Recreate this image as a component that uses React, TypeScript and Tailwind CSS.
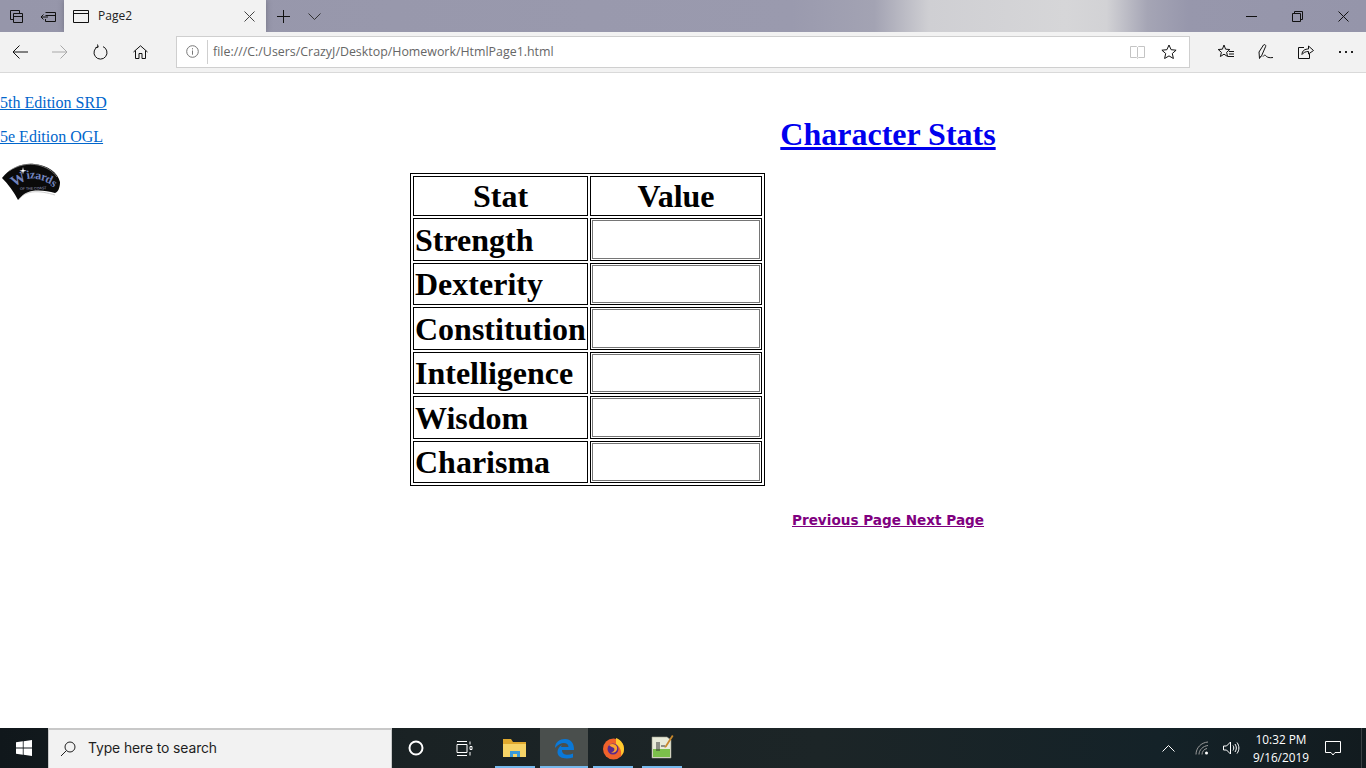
import React from "react";

const Ico = ({ w = 16, h = 16, children, className = "" }: { w?: number; h?: number; children: React.ReactNode; className?: string }) => (
  <svg width={w} height={h} viewBox={`0 0 ${w} ${h}`} fill="none" stroke="currentColor" strokeWidth="1" className={className}>
    {children}
  </svg>
);

const rows = ["Strength", "Dexterity", "Constitution", "Intelligence", "Wisdom", "Charisma"];

function TabBar() {
  return (
    <div className="h-8 flex items-stretch text-[#111] bg-[linear-gradient(90deg,#9696aa_0%,#9a9aae_58%,#a3a3b3_64%,#cfcfd3_68%,#d6d6d8_78%,#d2d2d5_81%,#a5a5b5_84%,#9797ac_87%,#9595aa_100%)]">
      <div className="w-[32px] flex items-center justify-center">
        <Ico w={15} h={15}>
          <path d="M1.5 1.5h9v3M1.5 1.5v9h3M4.5 4.5h9v9h-9zM4.5 7.5h9" />
        </Ico>
      </div>
      <div className="w-[32px] flex items-center justify-center">
        <Ico w={17} h={13}>
          <path d="M5.5 2.5h10v9h-10v-2.5M5.5 5.5h10M1 7h7M3.5 4.5L1 7l2.5 2.5" />
        </Ico>
      </div>
      <div className="w-[202px] bg-[#f2f2f2] flex items-center pl-[9px] shadow-[0_0_6px_rgba(0,0,0,0.25)]">
        <Ico w={16} h={13}>
          <path d="M0.5 0.5h15v12h-15zM0.5 3.5h15" />
        </Ico>
        <span className="ml-[9px] text-[12px] text-[#222] font-['Open_Sans',sans-serif] flex-1">Page2</span>
        <Ico w={11} h={11} className="mr-[11px] text-[#444]">
          <path d="M0.5 0.5l10 10M10.5 0.5l-10 10" />
        </Ico>
      </div>
      <div className="w-[34px] flex items-center justify-center">
        <Ico w={13} h={13} className="text-[#111]">
          <path d="M6.5 0v13M0 6.5h13" />
        </Ico>
      </div>
      <div className="w-[28px] flex items-center justify-center">
        <Ico w={13} h={7} className="text-[#333]">
          <path d="M0.5 0.5l6 6 6-6" />
        </Ico>
      </div>
      <div className="flex-1" />
      <div className="w-[46px] flex items-center justify-center">
        <Ico w={11} h={3}>
          <path d="M0 1.5h11" />
        </Ico>
      </div>
      <div className="w-[46px] flex items-center justify-center">
        <Ico w={11} h={11}>
          <path d="M0.5 2.5h8v8h-8zM2.5 2.5v-2h8v8h-2" />
        </Ico>
      </div>
      <div className="w-[46px] flex items-center justify-center">
        <Ico w={11} h={11}>
          <path d="M0.5 0.5l10 10M10.5 0.5l-10 10" />
        </Ico>
      </div>
    </div>
  );
}

function ToolBar() {
  return (
    <div className="h-[41px] bg-[#f2f2f2] border-b border-[#d9d9d9] flex items-center text-[#111] pb-[1px]">
      <div className="w-[176px] flex items-center shrink-0">
        <div className="w-[40px] flex justify-center">
          <Ico w={16} h={14}>
            <path d="M16 7H1M7.5 0.5L1 7l6.5 6.5" />
          </Ico>
        </div>
        <div className="w-[40px] flex justify-center">
          <Ico w={16} h={14} className="text-[#a8a8a8]">
            <path d="M0 7h15M8.5 0.5L15 7l-6.5 6.5" />
          </Ico>
        </div>
        <div className="w-[40px] flex justify-center">
          <Ico w={15} h={16}>
            <path d="M5 2.6a6.5 6.5 0 1 0 5 0M4.5 0.5l0.7 2.6-2.7 0.5" />
          </Ico>
        </div>
        <div className="w-[40px] flex justify-center">
          <Ico w={15} h={14}>
            <path d="M0.5 7L7.5 0.8 14.5 7M2.5 5.5v8h3.5v-5h3v5h3.5v-8" />
          </Ico>
        </div>
      </div>
      <div className="w-[1014px] h-[32px] bg-white border border-[#cfcfcf] flex items-center shrink-0">
        <div className="w-[30px] flex justify-center text-[#777]">
          <Ico w={13} h={13}>
            <circle cx="6.5" cy="6.5" r="5.8" />
            <path d="M6.5 5.5v4.2M6.5 3.2v1.2" />
          </Ico>
        </div>
        <div className="w-px h-[24px] bg-[#cfcfcf]" />
        <span className="ml-[5px] pt-[2px] flex-1 text-[12.4px] text-[#666] font-['Open_Sans',sans-serif]">file:///C:/Users/CrazyJ/Desktop/Homework/HtmlPage1.html</span>
        <div className="w-[16px] mr-[16px] text-[#c4c4c4] flex justify-center">
          <Ico w={15} h={14}>
            <path d="M0.5 1.5h6l1 1 1-1h6v11h-6l-1 1-1-1h-6zM7.5 2.5v10" />
          </Ico>
        </div>
        <div className="w-[16px] mr-[12px] flex justify-center">
          <Ico w={16} h={15}>
            <path d="M8 1l2.1 4.7 5 .5-3.8 3.3 1.1 5L8 11.9l-4.4 2.6 1.1-5L.9 6.2l5-.5z" />
          </Ico>
        </div>
      </div>
      <div className="flex-1 flex items-center">
        <div className="w-[40px] ml-[16px] flex justify-center">
          <Ico w={16} h={15}>
            <path d="M6 1l1.6 4.2 4.2.3-3.2 2.8 1 4.2L6 10.2 2.4 12.5l1-4.2L.2 5.5l4.2-.3zM11 7.5h5M11 10h5M10 12.5h6" />
          </Ico>
        </div>
        <div className="w-[40px] flex justify-center">
          <Ico w={16} h={16}>
            <path d="M3 12L1.5 14.5 1 8 5.5 1c1-1 2.6 0 2.2 1.3L3.5 12c-.2.5-.4.3-.5 0zM5 12.5c1.500-2 2.500-1.500 3.500 0 1.500 1 3 1.500 6.500 1" />
          </Ico>
        </div>
        <div className="w-[40px] flex justify-center">
          <Ico w={16} h={14}>
            <path d="M6 2.500H0.500v11h11V9M4 9.500c0-4 3-5.500 6.500-5.500V1L15.500 5.500 10.500 9V6.500c-3 0-5 1-6.500 3z" />
          </Ico>
        </div>
        <div className="w-[40px] flex justify-center gap-[4px]">
          <span className="w-[2px] h-[2px] bg-[#222]" />
          <span className="w-[2px] h-[2px] bg-[#222]" />
          <span className="w-[2px] h-[2px] bg-[#222]" />
        </div>
      </div>
    </div>
  );
}

const logoLetters: [string, number, number, number, number][] = [
  ["W", 14, 25, -30, 15],
  ["i", 27, 17, -8, 12],
  ["z", 30, 16.5, -2, 12],
  ["a", 35, 17, 5, 12],
  ["r", 40.5, 18, 15, 12],
  ["d", 44.5, 19.5, 25, 12],
  ["s", 50, 23, 35, 12],
];

function WizardsLogo() {
  return (
    <svg width="61" height="38" viewBox="0 0 61 38" className="block">
      <path d="M18.500 38C22 33 26 31 32 30c8-1 16 1 23 3" fill="none" stroke="#cfcfcf" strokeWidth="1" />
      <path d="M2 16C10 6 22 1 34 2c14 1 24 9 26 18 0 6-2 10-5 11-7-2-15-3-23-2-6 1-10 4-14 9C14 30 8 22 2 16z" fill="#0a0a0a" />
      <path d="M9 9C18 3 28 1 38 3c8 2 15 6 19 12" fill="none" stroke="#8a8a8a" strokeWidth="0.8" />
      {logoLetters.map(([c, x, y, r, s]) => (
        <text key={c} x={x} y={y} fontSize={s} fontFamily="'Liberation Serif',serif" fontWeight="700" fill="#7183bd" transform={`rotate(${r} ${x} ${y})`}>
          {c}
        </text>
      ))}
      <path d="M23 5l.7 3 3 .7-3 .7-.7 3-.7-3-3-.7 3-.7z" fill="#fff" />
      <text x="20" y="28" fontSize="3.6" fontFamily="'Liberation Sans',sans-serif" fill="#a3aed2" transform="rotate(-2 20 28)">OF THE COAST</text>
    </svg>
  );
}

function Page() {
  return (
    <div className="flex-1 bg-white flex font-['Liberation_Serif',serif] text-black overflow-hidden">
      <div className="w-[410px] shrink-0 pt-[21px] text-[16px] leading-[18px]">
        <p className="mb-4"><a className="text-[#0066cc] underline" href="#">5th Edition SRD</a></p>
        <p className="mb-4"><a className="text-[#0066cc] underline" href="#">5e Edition OGL</a></p>
        <WizardsLogo />
      </div>
      <div className="flex-1">
        <h1 className="mt-[43px] mb-[21px] text-[32px] leading-[36px] font-bold text-center">
          <a className="text-[#0000ee] underline" href="#">Character Stats</a>
        </h1>
        <table className="border border-black border-separate border-spacing-[2px] text-[32px] leading-[37px] font-bold w-[355px] table-fixed">
          <thead>
            <tr>
              <th className="border border-black h-[40px] p-0 w-[175px] text-center">Stat</th>
              <th className="border border-black h-[40px] p-0 text-center">Value</th>
            </tr>
          </thead>
          <tbody>
            {rows.map((r) => (
              <tr key={r}>
                <td className="border border-black h-[42.5px] p-0 pl-[1px] pt-[2px] whitespace-nowrap">{r}</td>
                <td className="border border-black h-[42.5px] p-[1px] align-middle">
                  <input className="block w-full h-[38.5px] border border-[#767676] bg-white outline-none" aria-label={r} />
                </td>
              </tr>
            ))}
          </tbody>
        </table>
        <div className="mt-[24px] text-center text-[13.6px] leading-[20px] font-bold font-['DejaVu_Sans',sans-serif]">
          <a className="text-[#800080] underline" href="#">Previous Page</a>
          <a className="text-[#800080] underline" href="#"> Next Page</a>
        </div>
      </div>
    </div>
  );
}

function TaskBar() {
  const run = "absolute left-0 right-0 bottom-0 h-[2px] bg-[#76b9ed]";
  return (
    <div className="h-10 flex items-stretch text-white bg-[linear-gradient(90deg,#10171b_0%,#1a2224_30%,#1c2527_60%,#142228_85%,#121b1f_100%)] font-['Open_Sans',sans-serif]">
      <div className="w-[48px] flex items-center justify-center">
        <svg width="16" height="16" viewBox="0 0 16 16" fill="#fff">
          <path d="M0 2.300l6.800-1v6.200H0zM7.600 1.200L16 0v7.500H7.600zM0 8.400h6.800v6.300L0 13.700zM7.600 8.400H16V16l-8.400-1.200z" />
        </svg>
      </div>
      <div className="w-[344px] bg-[#f2f2f2] border-t-2 border-x border-[#c8c8c8] flex items-center pl-[11px] text-[#1f1f1f]">
        <Ico w={16} h={16}>
          <circle cx="10" cy="6" r="5" />
          <path d="M6.400 9.600L1 15" />
        </Ico>
        <span className="ml-[12px] pb-[2px] text-[13.9px] font-['Inter',sans-serif] tracking-[-0.1px]">Type here to search</span>
      </div>
      <div className="w-[48px] flex items-center justify-center">
        <svg width="16" height="16" viewBox="0 0 16 16" fill="none" stroke="#fff" strokeWidth="2">
          <circle cx="8" cy="8" r="6.500" />
        </svg>
      </div>
      <div className="w-[48px] flex items-center justify-center">
        <Ico w={17} h={15}>
          <path d="M1 .5h10M1 14.500h10M1 3.500h10v8H1zM14 .5v3M14 5.500v3h2M14 5.500h2v3M14 11v3.500" />
        </Ico>
      </div>
      <div className="w-[7px]" />
      <div className="w-[40px] relative flex items-center justify-center">
        <svg width="24" height="20" viewBox="0 0 24 20">
          <path d="M0 1h8l2 3h13v3H0z" fill="#e0a92e" />
          <path d="M0 6h23v13H0z" fill="#f6d366" />
          <path d="M7 13h10v6h-3v-3h-4v3H7z" fill="#3b9ad9" />
        </svg>
        <span className={run} />
      </div>
      <div className="w-[5px]" />
      <div className="w-[48px] relative bg-[#4a4f4d] flex items-center justify-center">
        <svg width="21" height="21" viewBox="0 0 21 21">
          <path d="M1 10C1 4 6 1 11 1c6 0 9 4 9 11H8c0 5 6 6 11 3.500V19.500c-7 2-15 1-15.500-5C3.300 11.500 5 8.500 8 7c-.5.700-.8 1.300-.9 2H14.500c0-5-8-6-13.500 1z" fill="#0a78d7" />
        </svg>
        <span className={run} />
      </div>
      <div className="w-[5px]" />
      <div className="w-[40px] relative flex items-center justify-center">
        <svg width="23" height="23" viewBox="0 0 23 23">
          <circle cx="11.500" cy="12" r="10.500" fill="#f0622b" />
          <path d="M14 1c5 2 8 6 8 11 0 3-1 5-3 7 1-5-1-9-5-12z" fill="#ffcb2e" />
          <circle cx="11" cy="12" r="5.500" fill="#5b2a8c" />
          <path d="M7 8c3-2 7-1 8 2 1 4-3 7-6 5 3 0 4-2 3-4-1-1-3-1-5-3z" fill="#ffa52c" />
        </svg>
        <span className={run} />
      </div>
      <div className="w-[9px]" />
      <div className="w-[40px] relative flex items-center justify-center pb-[3px]">
        <svg width="23" height="25" viewBox="0 0 23 25">
          <path d="M1 3h15l4 3v18H1z" fill="#e8ead8" stroke="#9a9a8c" strokeWidth="0.6" />
          <path d="M2 15h17v8H2z" fill="#7cc04b" />
          <path d="M6 8v9M8 8v9M10 12h4" stroke="#333" strokeWidth="1" />
          <path d="M21 1l1.500 1-7 11-2 1 .5-2z" fill="#c9882c" />
        </svg>
        <span className={run} />
      </div>
      <div className="flex-1" />
      <div className="w-[40px] flex items-center justify-center">
        <Ico w={13} h={8}>
          <path d="M0.500 7.500l6-6 6 6" />
        </Ico>
      </div>
      <div className="w-[29px] flex items-center justify-center text-[#9a9a9a]">
        <Ico w={15} h={14}>
          <path d="M1 13.500C1 7 6 1.500 13 1M4 13.500C4 9 8 5 13 4.500M7 13.500c0-3 2-5.500 5-6" />
          <circle cx="11.500" cy="12" r="1.500" fill="#fff" stroke="none" />
        </Ico>
      </div>
      <div className="w-[29px] flex items-center justify-center">
        <Ico w={17} h={14}>
          <path d="M.5 5h3L7.500 1v12L3.500 9h-3zM10 4.500c1 1.500 1 3.500 0 5M12 3c1.800 2.500 1.800 5.500 0 8M14 1.500c2.500 3.500 2.500 7.500 0 11" />
        </Ico>
      </div>
      <div className="w-[70px] flex flex-col items-center justify-center text-[11.8px] leading-[18px] text-white">
        <span>10:32 PM</span>
        <span>9/16/2019</span>
      </div>
      <div className="w-[45px] pr-[11px] flex items-center justify-center">
        <Ico w={16} h={15}>
          <path d="M.5.5h15v11H10l-2 2.500-2-2.500H.5z" />
        </Ico>
      </div>
      <div className="w-[5px] border-l border-[#3a4144]" />
    </div>
  );
}

export default function App() {
  return (
    <div className="w-[1366px] h-[768px] flex flex-col overflow-hidden">
      <TabBar />
      <ToolBar />
      <Page />
      <TaskBar />
    </div>
  );
}
